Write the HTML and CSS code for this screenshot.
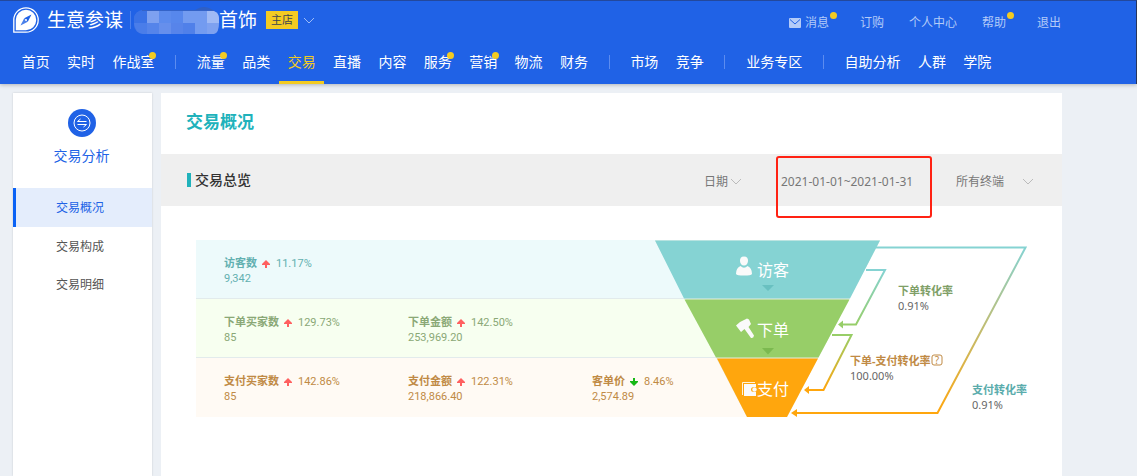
FILE: index.html
```html
<!DOCTYPE html>
<html lang="zh-CN">
<head>
<meta charset="utf-8">
<meta name="viewport" content="width=device-width, initial-scale=1">
<title>生意参谋 - 交易概况</title>
<link rel="stylesheet" href="styles.css">
</head>
<body>
<header class="header">
  <div class="topbar">
    <a class="brand" href="#">
      <svg class="logo" viewBox="0 0 26 26" aria-hidden="true">
        <path d="M0.800 25.200V13A12.200 12.200 0 1 1 13 25.200Z" fill="none" stroke="#fff" stroke-width="1.300"/>
        <path d="M2.800 23.200V13A10.200 10.200 0 1 1 13 23.200Z" fill="#fff"/>
        <path d="M18.500 7.500L14.800 14.800L11.200 11.200Z" fill="#2062e6"/>
        <path d="M11.200 11.200L14.800 14.800L7.500 18.500Z" fill="#4a80ea"/>
        <circle cx="13" cy="13" r="1" fill="#fff"/>
      </svg>
      <span class="brand-name">生意参谋</span>
    </a>
    <span class="brand-sep"></span>
    <svg class="mosaic" viewBox="0 0 85 28" aria-hidden="true">
      <rect x="0" y="4" width="84" height="24" rx="9" fill="#3f74e4"/>
      <path d="M60 5Q70 -3 80 5Z" fill="#2f5fc4"/>
      <path d="M8 4H80V6H8Z" fill="#3463c8"/>
      <path d="M0 17V12Q1 5 8 5H13V17Z" fill="#3a72e6"/>
      <path d="M0 17H13V28H9Q1 27 0 17Z" fill="#4a7de9"/>
      <path d="M13 5H25V17H13Z" fill="#7ea1f0"/>
      <path d="M25 5H37V17H25Z" fill="#5c8bed"/>
      <path d="M37 5H49V17H37Z" fill="#5787ec"/>
      <path d="M49 5H73V17H49Z" fill="#739bf0"/>
      <path d="M73 5H80Q85 7 85 12V17H73Z" fill="#a0baf5"/>
      <path d="M13 17H25V28H13Z" fill="#5584ea"/>
      <path d="M25 17H37V28H25Z" fill="#668fec"/>
      <path d="M37 17H49V28H37Z" fill="#5784ea"/>
      <path d="M49 17H61V28H49Z" fill="#5080e9"/>
      <path d="M61 17H73V28H61Z" fill="#739bf0"/>
      <path d="M73 17H85Q85 27 80 28H73Z" fill="#7ea1f0"/>
    </svg>
    <span class="shop-name">首饰</span>
    <span class="shop-tag">主店</span>
    <button class="shop-switch" type="button" aria-label="切换店铺">
      <svg class="chevron" viewBox="0 0 12 7" aria-hidden="true"><path d="M1 1L6 6L11 1"/></svg>
    </button>
    <nav class="links" aria-label="账户">
      <a class="link dot" href="#"><svg class="mail" viewBox="0 0 12 10" aria-hidden="true"><rect width="12" height="10" rx="1"/><path d="M1 1.500L6 6L11 1.500"/></svg>消息</a>
      <a class="link" href="#">订购</a>
      <a class="link" href="#">个人中心</a>
      <a class="link dot" href="#">帮助</a>
      <a class="link" href="#">退出</a>
    </nav>
  </div>
  <nav class="menu" aria-label="主导航">
    <a class="item" href="#">首页</a>
    <a class="item" href="#">实时</a>
    <a class="item" href="#"><span class="dot">作战室</span></a>
    <span class="sep"></span>
    <a class="item" href="#"><span class="dot">流量</span></a>
    <a class="item" href="#">品类</a>
    <a class="item current" href="#" aria-current="page">交易</a>
    <a class="item" href="#">直播</a>
    <a class="item" href="#">内容</a>
    <a class="item" href="#"><span class="dot">服务</span></a>
    <a class="item" href="#"><span class="dot">营销</span></a>
    <a class="item" href="#">物流</a>
    <a class="item" href="#">财务</a>
    <span class="sep"></span>
    <a class="item" href="#">市场</a>
    <a class="item" href="#">竞争</a>
    <span class="sep"></span>
    <a class="item" href="#">业务专区</a>
    <span class="sep"></span>
    <a class="item" href="#">自助分析</a>
    <a class="item" href="#">人群</a>
    <a class="item" href="#">学院</a>
  </nav>
</header>

<div class="page">
  <aside class="side">
    <div class="side-head">
      <svg class="side-icon" viewBox="0 0 28 28" aria-hidden="true">
        <circle cx="14" cy="14" r="14" fill="#2062e6"/>
        <g fill="none" stroke="#fff">
          <circle cx="14" cy="14" r="8"/>
          <path d="M18.500 12.500H9.500L12.500 10"/>
          <path d="M9.500 15.500H18.500L15.500 18"/>
        </g>
      </svg>
      <span class="side-title">交易分析</span>
    </div>
    <nav class="side-nav" aria-label="交易分析">
      <a class="side-link active" href="#">交易概况</a>
      <a class="side-link" href="#">交易构成</a>
      <a class="side-link" href="#">交易明细</a>
    </nav>
  </aside>

  <main class="main">
    <h1 class="title">交易概况</h1>
    <div class="bar">
      <h2 class="subtitle">交易总览</h2>
      <div class="filters">
        <button class="day" type="button">日期<svg class="chevron" viewBox="0 0 12 7" aria-hidden="true"><path d="M1 1L6 6L11 1"/></svg></button>
        <div class="range">
          <input class="range-input" type="text" aria-label="日期范围" value="2021-01-01~2021-01-31">
          <span class="highlight"></span>
        </div>
        <label class="terminal">
          <select class="terminal-select" aria-label="终端"><option>所有终端</option></select>
          <svg class="chevron" viewBox="0 0 12 7" aria-hidden="true"><path d="M1 1L6 6L11 1"/></svg>
        </label>
      </div>
    </div>

    <section class="chart">
      <div class="rows">
        <div class="row visit">
          <div class="cell"><div class="head"><b>访客数</b><svg class="arrow up" viewBox="0 0 8 8" role="img" aria-label="上升"><path d="M4 0L8 4V5H5V8H3V5H0V4Z"/></svg><span>11.17%</span></div><div>9,342</div></div>
        </div>
        <div class="row order">
          <div class="cell"><div class="head"><b>下单买家数</b><svg class="arrow up" viewBox="0 0 8 8" role="img" aria-label="上升"><path d="M4 0L8 4V5H5V8H3V5H0V4Z"/></svg><span>129.73%</span></div><div>85</div></div>
          <div class="cell"><div class="head"><b>下单金额</b><svg class="arrow up" viewBox="0 0 8 8" role="img" aria-label="上升"><path d="M4 0L8 4V5H5V8H3V5H0V4Z"/></svg><span>142.50%</span></div><div>253,969.20</div></div>
        </div>
        <div class="row pay">
          <div class="cell"><div class="head"><b>支付买家数</b><svg class="arrow up" viewBox="0 0 8 8" role="img" aria-label="上升"><path d="M4 0L8 4V5H5V8H3V5H0V4Z"/></svg><span>142.86%</span></div><div>85</div></div>
          <div class="cell"><div class="head"><b>支付金额</b><svg class="arrow up" viewBox="0 0 8 8" role="img" aria-label="上升"><path d="M4 0L8 4V5H5V8H3V5H0V4Z"/></svg><span>122.31%</span></div><div>218,866.40</div></div>
          <div class="cell"><div class="head"><b>客单价</b><svg class="arrow down" viewBox="0 0 8 8" role="img" aria-label="下降"><path d="M4 8L0 4V3H3V0H5V3H8V4Z"/></svg><span>8.46%</span></div><div>2,574.89</div></div>
        </div>
      </div>
      <svg class="funnel" viewBox="0 0 384 177" role="img" aria-label="转化漏斗">
        <defs>
          <linearGradient id="g1" gradientUnits="userSpaceOnUse" x1="0" y1="30" x2="0" y2="85"><stop offset="0" stop-color="#85d3d3"/><stop offset="1" stop-color="#97ce68"/></linearGradient>
          <linearGradient id="g2" gradientUnits="userSpaceOnUse" x1="0" y1="95" x2="0" y2="150"><stop offset="0" stop-color="#97ce68"/><stop offset="1" stop-color="#ffa60d"/></linearGradient>
          <linearGradient id="g3" gradientUnits="userSpaceOnUse" x1="0" y1="7" x2="0" y2="173"><stop offset="0" stop-color="#85d3d3"/><stop offset="1" stop-color="#ffa60d"/></linearGradient>
        </defs>
        <path d="M0 0.500H225L132 177H92Z" fill="#e6ecdf"/>
        <path d="M0 0.500H225L195 58.500H29Z" fill="#85d3d3"/>
        <path d="M29.500 59.500H194.500L163.500 117.500H61Z" fill="#97ce68"/>
        <path d="M62 118.500H163L132 177H92Z" fill="#ffa60d"/>
        <path d="M107 45H119L113 51Z" fill="#69c0c0"/>
        <path d="M107 108H119L113 114.500Z" fill="#7cb950"/>

        <g fill="#fafafa">
          <path d="M89 16.500C92 16.500 93.200 18.500 93 21C92.800 23.500 91.500 25.500 89 25.500C86.500 25.500 85.200 23.500 85 21C84.800 18.500 86 16.500 89 16.500Z"/>
          <path d="M85.500 26Q89 29.500 92.500 26Q97 28 97 34Q96 35.500 89 35.500Q82 35.500 81 34Q81 28 85.500 26Z"/>
          <path d="M81 85.500L85 82L92 78.500L94 79.500L96 84L93.500 87L99 95.500Q98.500 98.500 96 98L89.500 89L86 92Z"/>
          <path d="M89 144H101V147H99Q96 147 96 149.500Q96 152 99 152H101V156H89Z"/>
          <circle cx="99.500" cy="149.500" r="2.200"/>
        </g>
        <path d="M87.500 155V142.500H100" fill="none" stroke="#fff3dc"/>
        <g class="stage">
          <text x="102" y="36">访客</text>
          <text x="102" y="96">下单</text>
          <text x="102" y="155">支付</text>
        </g>

        <g class="flow">
          <path d="M221 7.500H370.500L282.500 173H141" stroke="url(#g3)"/>
          <path d="M211 30H230L201 84.500H188" stroke="url(#g1)"/>
          <path d="M177 95H196.500L168.500 150H154" stroke="url(#g2)"/>
        </g>
        <path d="M183 84.500L188 80.500V88.500Z" fill="#97ce68"/>
        <path d="M149 150L154 146V154ZM136 173L142 169V177Z" fill="#ffa60d"/>

        <g class="rate">
          <text class="rate-order" x="243" y="55">下单转化率</text>
          <text x="243" y="70">0.91%</text>
          <text class="rate-mid" x="195" y="125">下单-支付转化率</text>
          <text x="195" y="140">100.00%</text>
          <text class="rate-pay" x="317" y="154">支付转化率</text>
          <text x="317" y="169">0.91%</text>
          <rect x="277" y="115" width="10" height="10" rx="2" fill="none" stroke="#c08a45"/>
          <text class="rate-help" x="282" y="124">?</text>
        </g>
      </svg>
    </section>
  </main>
</div>
</body>
</html>
```
FILE: styles.css
```css
* { box-sizing: border-box; }

body {
  margin: 0;
  min-height: 100vh;
  display: flex;
  flex-direction: column;
  background: #ecf0f5;
  color: #555;
  font: 12px/16px "Noto Sans", "Noto Sans CJK SC", sans-serif;
}

a { color: inherit; text-decoration: none; }

button, input, select {
  margin: 0;
  padding: 0;
  border: 0;
  background: none;
  color: inherit;
  font: inherit;
  appearance: none;
}

.chevron {
  width: 12px;
  height: 7px;
  fill: none;
  stroke: #bbb;
  flex: none;
}

/* Header */
.header {
  position: relative;
  background: #2062e6;
  border-top: 1px solid #23489c;
  border-right: 1px solid #26355c;
  color: #fff;
  box-shadow: 0 1px 4px rgba(0, 0, 0, 0.25);
}

.topbar {
  display: flex;
  align-items: center;
  height: 38px;
  padding: 0 75px 0 13px;
}

.brand { display: flex; align-items: center; gap: 8px; }
.logo { width: 26px; height: 26px; }
.brand-name, .shop-name { font-size: 19px; line-height: 26px; }
.brand-sep { width: 1px; height: 18px; margin: 0 3px 0 7px; background: #4a80ee; }
.mosaic { width: 85px; height: 28px; }

.shop-tag {
  margin: 0 5px 0 9px;
  padding: 0 5px;
  background: #f3cb22;
  color: #3b4453;
  font-size: 11px;
  line-height: 18px;
}

.shop-switch { display: flex; }
.shop-switch .chevron { stroke: #9dbcf8; }

.links {
  display: flex;
  gap: 25px;
  margin-left: auto;
  padding-top: 6px;
  color: #b4cbf8;
}

.link { display: flex; align-items: center; }
.link.dot { margin-right: 6px; }
.mail { width: 12px; height: 10px; margin-right: 4px; fill: #b4cbf8; }
.mail path { fill: none; stroke: #2062e6; }

.dot { position: relative; }
.dot::after {
  content: "";
  position: absolute;
  top: 0;
  right: -2px;
  width: 7px;
  height: 7px;
  border-radius: 50%;
  background: #f3cb22;
}
.link.dot::after { top: -3px; right: -8px; }

.menu {
  display: flex;
  align-items: center;
  padding: 0 136px 0 13px;
  font-size: 14px;
}

.item {
  flex: 1 1 auto;
  padding: 3px 8px 0;
  border-bottom: 3px solid transparent;
  line-height: 39px;
  text-align: center;
  white-space: nowrap;
}

.current { border-color: #f3cb22; color: #f3cb22; }
.sep { width: 1px; height: 14px; margin: 0 12px; background: #5c8cf0; }

/* Page body */
.page {
  flex: 1;
  display: grid;
  grid-template-columns: 139px minmax(0, 1fr);
  gap: 9px;
  padding: 9px 75px 0 13px;
}

.side, .main { background: #fff; }
.side { box-shadow: 0 0 2px rgba(0, 0, 0, 0.15); }

.side-head {
  display: flex;
  flex-direction: column;
  align-items: center;
  gap: 8px;
  padding: 16px 2px 21px 0;
}

.side-icon { width: 28px; height: 28px; }
.side-title { color: #2062e6; font-size: 14px; line-height: 22px; }

.side-link {
  display: block;
  padding: 1px 8px 0 0;
  border-left: 3px solid transparent;
  line-height: 37px;
  text-align: center;
}

.side-link.active {
  border-color: #0a62f5;
  background: #e4edfc;
  color: #2062e6;
  line-height: 38px;
}

.title {
  margin: 0;
  padding: 0 0 4px 25px;
  color: #20b2bb;
  font-size: 17px;
  line-height: 57px;
}

.bar {
  display: flex;
  align-items: center;
  justify-content: space-between;
  height: 52px;
  padding: 0 28px 0 26px;
  background: #efefef;
  color: #777;
}

.subtitle {
  margin: 0;
  padding-left: 4px;
  border-left: 4px solid #20b2bb;
  color: #333;
  font-size: 14px;
  font-weight: 500;
  line-height: 14px;
}

.filters { display: flex; align-items: center; padding-top: 3px; }
.day { display: flex; align-items: center; gap: 2px; }
.range { position: relative; margin: 0 24px 0 39px; }
.range-input { display: block; width: 151px; }

.highlight {
  position: absolute;
  inset: -18px 0 -28px -5px;
  border: 2px solid #ff2213;
  border-radius: 3px;
  pointer-events: none;
}

.terminal { display: flex; align-items: center; }
.terminal-select { width: 66px; }

/* Conversion chart */
.chart {
  display: grid;
  grid-template-columns: minmax(0, 1fr) 292px;
  padding: 34px 23px 34px 35px;
}

.rows {
  font-family: Roboto, "Noto Sans CJK SC", sans-serif;
  font-size: 11px;
  line-height: 15px;
}

.row {
  display: grid;
  grid-template-columns: 184px 184px 1fr;
  height: 59px;
  padding: 16px 0 0 28px;
  border-bottom: 1px solid #e2ebec;
}

.visit { background: #edfafb; color: #62b0b0; }
.order { background: #f7fff0; color: #8aa876; }
.pay { background: #fffaf4; border-color: #fffaf4; color: #c08a45; }

.head { display: flex; align-items: center; }
.arrow { width: 8px; height: 8px; margin: 0 6px 0 5px; }
.up { fill: #ff6060; }
.down { fill: #16b816; }

.funnel { width: 384px; height: 177px; margin-left: -92px; }
.stage { fill: #fff; font-size: 16px; }
.flow { fill: none; stroke-width: 2; }
.rate { fill: #666; font-size: 11px; }
.rate-order, .rate-mid, .rate-pay { font-weight: 700; }
.rate-order { fill: #7f9f68; }
.rate-mid, .rate-help { fill: #c08a45; }
.rate-pay { fill: #5aacac; }
.rate-help { font-size: 10px; text-anchor: middle; }
```
